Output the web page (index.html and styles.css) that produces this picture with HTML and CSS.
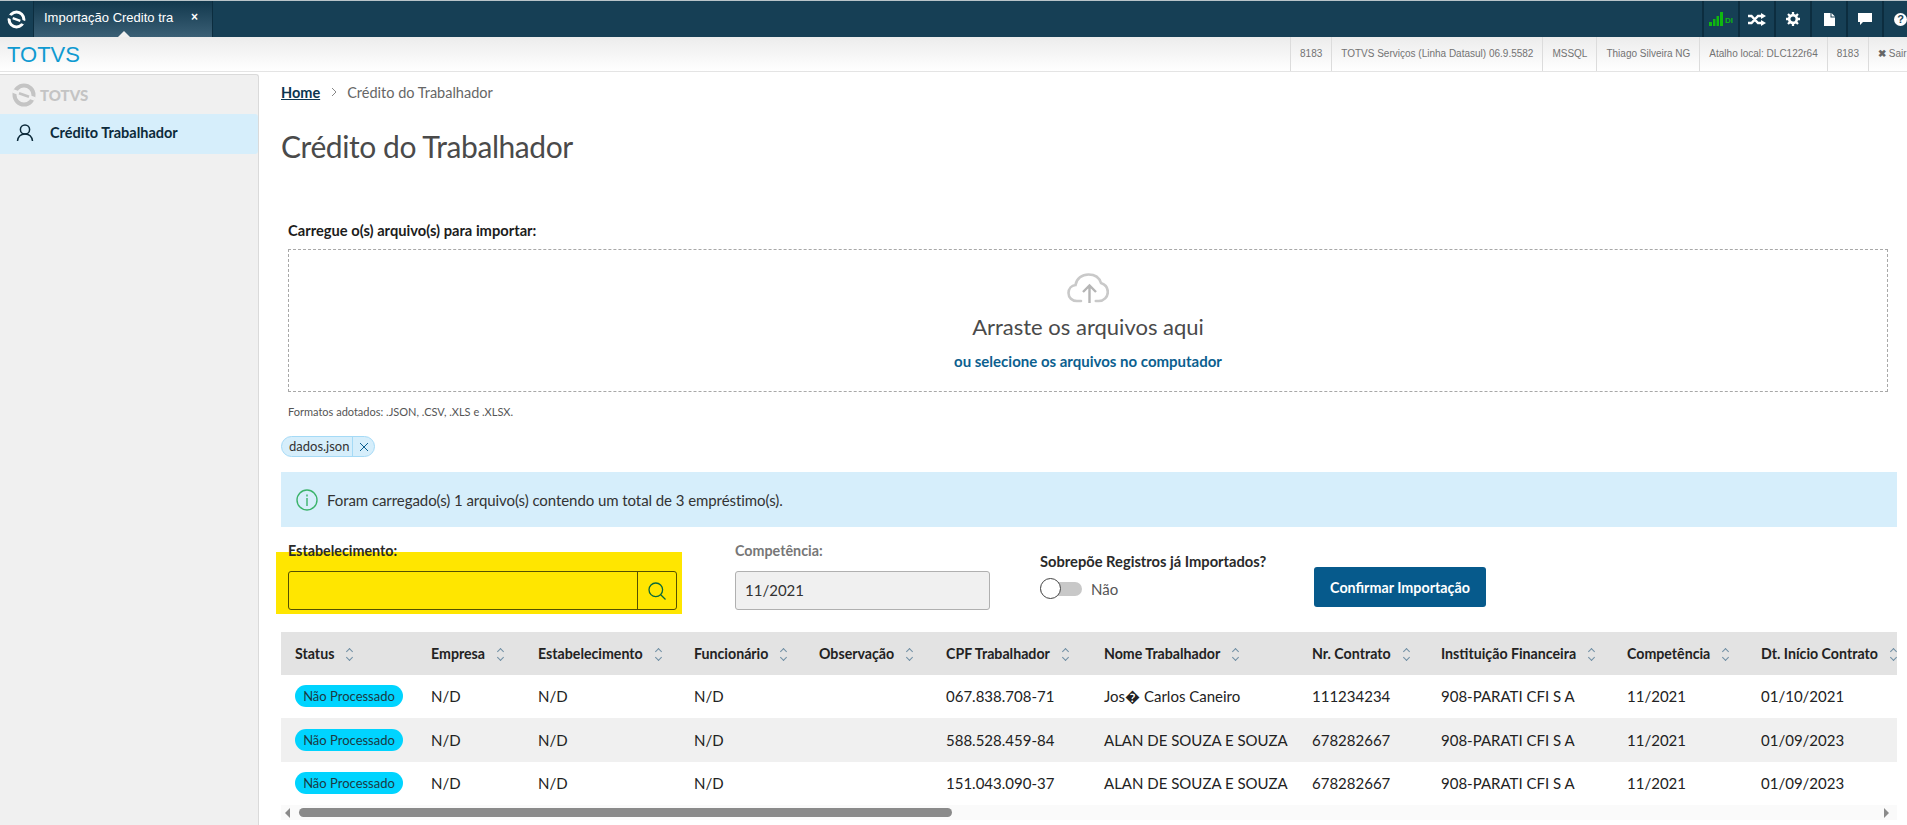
FILE: index.html
```html
<!DOCTYPE html>
<html lang="pt">
<head>
<meta charset="utf-8">
<title>Crédito do Trabalhador</title>
<link rel="stylesheet" href="styles.css">
</head>
<body>
<header class="topbar">
  <div class="home-btn">
    <svg viewBox="0 0 20 20" width="19" height="19"><circle cx="10" cy="10" r="7.800" fill="none" stroke="#fff" stroke-width="3.200"/><path d="M1 6.500 L19 13.500" stroke="#163f55" stroke-width="3.600"/><path d="M6 8.500 L14 11.500" stroke="#fff" stroke-width="2.400"/></svg>
  </div>
  <div class="tab"><span>Importação Credito tra</span><span class="tab-x">×</span><i class="tab-arrow"></i></div>
  <div class="tools">
    <div class="tool signal">
      <svg viewBox="0 0 14 14" width="14" height="14"><path fill="#0fb90f" d="M0 10h3v4H0zM4 7h2.500v7H4zM7.500 4H10v10H7.500zM11 0h3v14h-3z"/></svg><span class="di">DI</span>
    </div>
    <div class="tool"><svg viewBox="0 0 18 13" width="18" height="13"><path fill="none" stroke="#fff" stroke-width="2.400" d="M0 3h3.500l6.500 7h4M0 10h3.500l6.500-7h4"/><path fill="#fff" d="M13 0l5 3-5 3zM13 7l5 3-5 3z"/></svg></div>
    <div class="tool"><svg viewBox="0 0 16 16" width="14" height="14"><circle cx="8" cy="8" r="4.400" fill="none" stroke="#fff" stroke-width="3"/><path stroke="#fff" stroke-width="2.600" d="M8 0v3M8 13v3M0 8h3M13 8h3M2.300 2.300l2.200 2.200M11.500 11.500l2.200 2.200M2.300 13.700l2.200-2.200M11.500 4.500l2.200-2.200"/></svg></div>
    <div class="tool"><svg viewBox="0 0 11 13" width="11" height="13"><path fill="#fff" d="M0 0h6.500v4.500H11V13H0zM7.500 0L11 3.500H7.500z"/></svg></div>
    <div class="tool"><svg viewBox="0 0 14 12" width="14" height="12"><path fill="#fff" d="M0 0h14v9H5l-3 3V9H0z"/></svg></div>
    <div class="tool help"><span>?</span></div>
  </div>
</header>

<div class="infobar">
  <div class="brand">TOTVS</div>
  <ul class="infos">
    <li>8183</li>
    <li>TOTVS Serviços (Linha Datasul) 06.9.5582</li>
    <li>MSSQL</li>
    <li>Thiago Silveira NG</li>
    <li>Atalho local: DLC122r64</li>
    <li>8183</li>
    <li class="logout"><b>✖</b> Sair</li>
  </ul>
</div>

<div class="app">
  <aside class="sidebar">
    <div class="side-logo">
      <svg viewBox="0 0 24 24" width="24" height="24"><circle cx="12" cy="12" r="9.500" fill="none" stroke="#c4c4c4" stroke-width="4"/><path d="M1 8 L23 16" stroke="#f0f0f0" stroke-width="3.500"/><path d="M7 10.200 L17 13.800" stroke="#c4c4c4" stroke-width="2.600"/></svg>
      <span>TOTVS</span>
    </div>
    <div class="side-item">
      <svg viewBox="0 0 20 20" width="20" height="20"><circle cx="10" cy="6.500" r="4.600" fill="none" stroke="#0c2a3a" stroke-width="1.500"/><path d="M2.500 18c.6-4.600 3.400-7 7.500-7s6.900 2.400 7.500 7" fill="none" stroke="#0c2a3a" stroke-width="1.500"/></svg>
      <span>Crédito Trabalhador</span>
    </div>
  </aside>

  <main class="content">
    <nav class="crumbs"><a>Home</a><svg class="sep" viewBox="0 0 6 10" width="6" height="10"><path d="M1 1l4 4-4 4" fill="none" stroke="#888" stroke-width="1"/></svg><span>Crédito do Trabalhador</span></nav>
    <h1 class="title">Crédito do Trabalhador</h1>

    <section class="upload">
      <label class="upload-label">Carregue o(s) arquivo(s) para importar:</label>
      <div class="dropzone">
        <svg viewBox="0 0 42 30" width="42" height="30"><path fill="none" stroke="#c9c9c9" stroke-width="2.600" stroke-linecap="round" d="M14 28H10C5 28 1.500 24.500 1.500 20 1.500 15.500 4.500 12.500 8.500 12 9.500 5.500 15 1.500 21.500 1.500c6.500 0 11 3.500 12.500 8.500 4.500 1.500 6.800 5 6.800 9 0 5-4 9-9 9h-3"/><path fill="none" stroke="#b5b5b5" stroke-width="2.400" d="M22.500 30V13M16 19l6.500-6.500L29 19"/></svg>
        <div class="drop-title">Arraste os arquivos aqui</div>
        <div class="drop-link">ou selecione os arquivos no computador</div>
      </div>
      <p class="formats">Formatos adotados: .JSON, .CSV, .XLS e .XLSX.</p>
      <div class="chip"><span class="chip-name">dados.json</span><span class="chip-x"><svg viewBox="0 0 10 10" width="10" height="10"><path d="M1 1l8 8M9 1l-8 8" stroke="#0c5f8f" stroke-width="1"/></svg></span></div>
    </section>

    <div class="notice">
      <svg viewBox="0 0 22 22" width="22" height="22"><circle cx="11" cy="11" r="10" fill="none" stroke="#3bb36b" stroke-width="1.400"/><path d="M11 9v8M11 5.500v2" stroke="#3bb36b" stroke-width="1.400"/></svg>
      <span>Foram carregado(s) 1 arquivo(s) contendo um total de 3 empréstimo(s).</span>
    </div>

    <div class="form-row">
      <div class="highlight">
        <label class="field-label">Estabelecimento:</label>
        <div class="lookup">
          <div class="lookup-input"></div>
          <div class="lookup-btn"><svg viewBox="0 0 18 18" width="18" height="18"><circle cx="7.800" cy="7.800" r="6.800" fill="none" stroke="#0a6a3a" stroke-width="1.300"/><path d="M12.500 12.500l5 5" stroke="#0a6a3a" stroke-width="1.300"/></svg></div>
        </div>
      </div>
      <div class="field-comp">
        <label class="field-label muted">Competência:</label>
        <div class="comp-input">11/2021</div>
      </div>
      <div class="field-switch">
        <label class="field-label">Sobrepõe Registros já Importados?</label>
        <div class="switch-row"><span class="switch"><i></i></span><span class="switch-text">Não</span></div>
      </div>
      <button class="confirm">Confirmar Importação</button>
    </div>

    <div class="table-wrap">
      <table class="grid">
        <thead>
          <tr>
            <th class="c-status">Status<i class="sort"></i></th>
            <th class="c-emp">Empresa<i class="sort"></i></th>
            <th class="c-est">Estabelecimento<i class="sort"></i></th>
            <th class="c-fun">Funcionário<i class="sort"></i></th>
            <th class="c-obs">Observação<i class="sort"></i></th>
            <th class="c-cpf">CPF Trabalhador<i class="sort"></i></th>
            <th class="c-nome">Nome Trabalhador<i class="sort"></i></th>
            <th class="c-nr">Nr. Contrato<i class="sort"></i></th>
            <th class="c-inst">Instituição Financeira<i class="sort"></i></th>
            <th class="c-comp">Competência<i class="sort"></i></th>
            <th class="c-dt">Dt. Início Contrato<i class="sort"></i></th>
          </tr>
        </thead>
        <tbody>
          <tr>
            <td><span class="badge">Não Processado</span></td><td>N/D</td><td>N/D</td><td>N/D</td><td></td>
            <td>067.838.708-71</td><td>Jos� Carlos Caneiro</td><td>111234234</td><td>908-PARATI CFI S A</td><td>11/2021</td><td>01/10/2021</td>
          </tr>
          <tr class="alt">
            <td><span class="badge">Não Processado</span></td><td>N/D</td><td>N/D</td><td>N/D</td><td></td>
            <td>588.528.459-84</td><td>ALAN DE SOUZA E SOUZA</td><td>678282667</td><td>908-PARATI CFI S A</td><td>11/2021</td><td>01/09/2023</td>
          </tr>
          <tr>
            <td><span class="badge">Não Processado</span></td><td>N/D</td><td>N/D</td><td>N/D</td><td></td>
            <td>151.043.090-37</td><td>ALAN DE SOUZA E SOUZA</td><td>678282667</td><td>908-PARATI CFI S A</td><td>11/2021</td><td>01/09/2023</td>
          </tr>
        </tbody>
      </table>
      <div class="hscroll">
        <i class="arrow-l"></i>
        <div class="track"><div class="thumb"></div></div>
        <i class="arrow-r"></i>
      </div>
    </div>
  </main>
</div>
</body>
</html>
```
FILE: styles.css
```css
* { box-sizing: border-box; }
html, body { margin: 0; height: 100%; overflow: hidden; }
body { width: 1907px; height: 825px; background: #fff; font-family: "Lato", sans-serif; color: #1c1c1c; display: flex; flex-direction: column; }

.topbar { height: 37px; flex: none; display: flex; background: #163f55; border-top: 1px solid #b9c4c9; }
.home-btn { width: 34px; display: flex; align-items: center; justify-content: center; border-right: 1px solid #0c2d3f; }
.tab { position: relative; width: 179px; display: flex; align-items: center; justify-content: space-between; padding: 0 14px 4px 10px; color: #fff; font: 13px "Liberation Sans", sans-serif; background: linear-gradient(#12384d, #3a5f75); border-right: 1px solid #0c2d3f; }
.tab-x { font-size: 12px; font-weight: bold; }
.tab-arrow { position: absolute; left: 84px; bottom: 0; border: 6px solid transparent; border-top: 0; border-bottom-color: #f0f0f0; }
.tools { margin-left: auto; display: flex; }
.tool { width: 36px; display: flex; align-items: center; justify-content: center; border-left: 2px solid #0c2d3f; color: #fff; }
.signal { gap: 2px; }
.di { font: bold 8px "Liberation Sans", sans-serif; color: #0fb90f; margin-top: 2px; }
.help { width: 25px; justify-content: flex-start; padding-left: 10px; }
.help span { flex: none; width: 13px; height: 13px; border-radius: 50%; background: #fff; color: #163f55; font: bold 11px/13px "Liberation Sans", sans-serif; text-align: center; }

.infobar { height: 35px; flex: none; display: flex; justify-content: space-between; background: linear-gradient(#ececec, #fff); border-bottom: 1px solid #e4e4e4; overflow: hidden; }
.brand { color: #0f9ad1; font: 22px/36px "Liberation Sans", sans-serif; padding-left: 7px; }
.infos { display: flex; flex: none; list-style: none; margin: 0; padding: 0; font: 10px/34px "Liberation Sans", sans-serif; color: #737373; white-space: nowrap; }
.infos li { padding: 0 9px; border-left: 1px solid #dcdcdc; }
.infos .logout { width: 39px; padding-right: 0; }
.logout b { color: #666; }

.app { flex: 1; display: flex; min-height: 0; padding-top: 2px; }
.sidebar { width: 259px; flex: none; background: #f0f0f0; border: 1px solid #dadada; border-left: 0; border-bottom: 0; border-top-right-radius: 3px; }
.side-logo { height: 39px; display: flex; align-items: center; gap: 4px; padding-left: 12px; color: #c4c4c4; font: 900 15px "Lato", sans-serif; }
.side-item { height: 40px; background: #d6eefb; display: flex; align-items: center; gap: 15px; padding: 0 0 3px 15px; font-size: 14.500px; font-weight: 700; color: #0c2a3a; border-radius: 0 3px 3px 0; }

.content { flex: 1; min-width: 0; padding-left: 22px; overflow: hidden; }
.crumbs { height: 20px; margin-top: 8px; display: flex; align-items: center; font-size: 14.500px; color: #666; }
.crumbs a { color: #0b3550; text-decoration: underline; font-weight: 700; }
.crumbs .sep { margin: 0 10px 0 11px; }
.title { margin: 23px 0 0; font-size: 30px; letter-spacing: -.43px; line-height: 42px; font-weight: 400; color: #4a4a4a; }

.upload { margin-top: 54px; }
.upload-label { display: block; margin-left: 7px; font-size: 14.700px; font-weight: 700; color: #1c1c1c; line-height: 18px; }
.dropzone { margin: 10px 0 0 7px; width: 1600px; height: 143px; border: 1px dashed #a8a8a8; display: flex; flex-direction: column; align-items: center; padding-top: 23px; }
.drop-title { margin-top: 10px; font-size: 22px; line-height: 28px; color: #4a4a4a; }
.drop-link { margin-top: 11px; font-size: 15px; font-weight: 700; color: #0c5f8f; line-height: 18px; }
.formats { margin: 13px 0 0 7px; font-size: 11px; line-height: 14px; color: #555; }
.chip { display: flex; width: 94px; margin-top: 17px; height: 21px; background: #d6eefb; border: 1px solid #a5daf6; border-radius: 11px; font-size: 13px; line-height: 19px; color: #333; }
.chip-name { flex: 1; padding-left: 7px; border-right: 1px solid #a5daf6; }
.chip-x { width: 21px; display: flex; align-items: center; justify-content: center; }

.notice { margin-top: 15px; height: 55px; width: 1616px; background: #d6eefb; display: flex; align-items: center; gap: 9px; padding-left: 15px; font-size: 15px; letter-spacing: -.07px; color: #333; }

.form-row { display: flex; height: 105px; }
.highlight { position: relative; margin: 25px 0 0 -5px; width: 406px; height: 62px; background: #ffe600; padding: 19px 5px 0 12px; }
.field-label { display: block; font-size: 14.300px; line-height: 18px; font-weight: 700; color: #2a2a2a; }
.highlight .field-label { position: absolute; top: -10px; left: 12px; }
.lookup { display: flex; height: 39px; border: 1px solid #555000; border-radius: 3px; }
.lookup-input { flex: 1; }
.lookup-btn { width: 39px; border-left: 1px solid #555000; display: flex; align-items: center; justify-content: center; }
.muted { color: #777; }
.field-comp { margin: 15px 0 0 53px; width: 255px; }
.comp-input { margin-top: 11px; height: 39px; background: #f0f0f0; border: 1px solid #b0b0b0; border-radius: 3px; padding-left: 9px; font-size: 15px; line-height: 37px; color: #333; }
.field-switch { margin: 25px 0 0 50px; width: 274px; }
.field-switch .field-label { font-size: 14.700px; }
.switch-row { display: flex; align-items: center; gap: 9px; margin-top: 8px; height: 21px; }
.switch { position: relative; width: 42px; height: 14px; background: #c8c8c8; border-radius: 7px; }
.switch i { position: absolute; left: 0; top: -3.500px; width: 21px; height: 21px; background: #fff; border: 1px solid #444; border-radius: 50%; }
.switch-text { font-size: 15px; color: #555; }
.confirm { margin-top: 40px; width: 172px; height: 40px; background: #065a8c; border: 0; border-radius: 3px; color: #fff; font: 700 14.300px "Lato", sans-serif; }

.table-wrap { width: 1616px; overflow: hidden; }
.grid { border-collapse: collapse; table-layout: fixed; width: 1659px; font-size: 15px; }
.grid th { height: 43px; background: #e3e3e3; text-align: left; padding: 0 0 0 14px; font-size: 14.200px; font-weight: 700; white-space: nowrap; color: #222; }
.grid td { height: 43px; padding: 0 0 1px 14px; white-space: nowrap; color: #222; }
.grid .alt td { height: 44px; background: #f0f0f0; }
.sort { display: inline-block; vertical-align: -1px; width: 7px; height: 12px; margin-left: 12px; position: relative; }
.sort::before, .sort::after { content: ""; position: absolute; left: 1px; width: 4px; height: 4px; border: solid #6f8ea3; border-width: 1px 0 0 1px; transform: rotate(45deg); }
.sort::before { top: 1px; }
.sort::after { top: 7px; transform: rotate(225deg); }
.badge { display: block; width: 108px; height: 22px; border-radius: 11px; background: #00d4ff; text-align: center; font-size: 13px; line-height: 22px; color: #1c3a44; }
.c-status { width: 136px; } .c-emp { width: 107px; } .c-est { width: 156px; } .c-fun { width: 125px; } .c-obs { width: 127px; }
.c-cpf { width: 158px; } .c-nome { width: 208px; } .c-nr { width: 129px; } .c-inst { width: 186px; } .c-comp { width: 134px; } .c-dt { width: 193px; }
.hscroll { height: 15px; display: flex; align-items: center; background: #fafafa; padding: 0 8px 0 4px; }
.arrow-l { border: 5px solid transparent; border-left: 0; border-right-color: #8a8a8a; }
.arrow-r { border: 5px solid transparent; border-right: 0; border-left-color: #8a8a8a; }
.track { flex: 1; margin: 0 9px; }
.thumb { width: 653px; height: 9px; background: #8a8a8a; border-radius: 5px; }
```
